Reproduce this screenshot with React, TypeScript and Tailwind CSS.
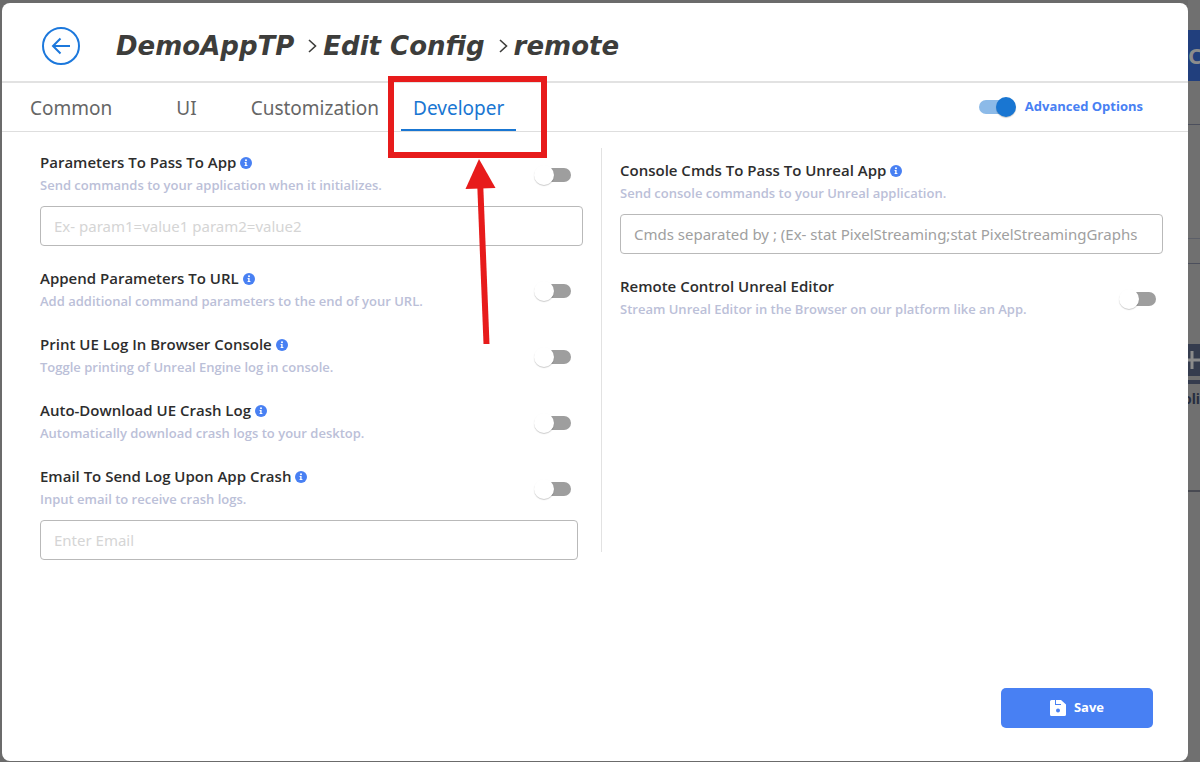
import React from "react";

interface SwitchProps {
    id: string;
    defaultChecked?: boolean;
}

const Switch: React.FC<SwitchProps> = ({ id, defaultChecked = false }) => (
    <input
        id={id}
        type="checkbox"
        role="switch"
        defaultChecked={defaultChecked}
        className="relative h-[14px] w-[34px] shrink-0 cursor-pointer appearance-none rounded-full bg-[#9e9e9e] before:absolute before:-left-[3px] before:-top-[3px] before:size-5 before:rounded-full before:bg-white before:shadow-[0_1px_1px_rgba(0,0,0,0.2)] checked:bg-[#8cbae8] checked:before:left-[17px] checked:before:bg-[#1976d2]"
    />
);

const InfoIcon = () => (
    <svg width="12" height="12" viewBox="0 0 12 12" className="mt-[2px]" aria-hidden="true">
        <circle cx="6" cy="6" r="6" fill="#4880f3" />
        <circle cx="6" cy="3.2" r="1" fill="#fff" />
        <path d="M4.6 5h2v3h.8v1H4.6V8h.6V6h-.6z" fill="#fff" />
    </svg>
);

interface SettingProps {
    id: string;
    title: string;
    description: string;
    info?: boolean;
    toggle?: boolean;
    children?: React.ReactNode;
}

const Setting: React.FC<SettingProps> = ({ id, title, description, info = true, toggle = true, children }) => (
    <div>
        <div className="flex items-center justify-between">
            <div className="font-['Open_Sans',sans-serif]">
                <div className="flex h-6 items-center gap-1">
                    <label htmlFor={id} className="text-[15px] leading-6 font-semibold text-[#2d2d2d]">{title}</label>
                    {info && <InfoIcon />}
                </div>
                <p className="text-[13px] leading-[22px] font-semibold text-[#bbc0d8]">{description}</p>
            </div>
            {toggle && (
                <div className="mr-3 flex items-center pt-1">
                    <Switch id={id} />
                </div>
            )}
        </div>
        {children}
    </div>
);

const inputClass = "mt-[10px] block h-10 w-full rounded-[4px] border border-[#b9b9b9] bg-transparent px-[13px] text-[15px] text-[#444] outline-none";

const tabs = [
    { name: "Common", className: "ml-3 px-4" },
    { name: "UI", className: "ml-8 px-4" },
    { name: "Customization", className: "ml-[22px] px-4" },
    { name: "Developer", className: "ml-[6px] px-3" },
];

// Part of the page that stays visible beside the dialog
const Backdrop = () => (
    <aside className="w-3 shrink-0 overflow-hidden bg-[#707070]" aria-hidden="true">
        <div className="mt-[30px] flex h-[51px] items-center bg-[#213f7d] text-[22px] font-bold text-[#8c8c8c]">C</div>
        <div className="h-11 border-b border-[#4c4f5c]" />
        <div className="h-[114px] border-b border-[#5c5f68]" />
        <div className="h-[25px] border-b border-[#4c4f5c]" />
        <div className="mt-20 flex h-8 items-center justify-center bg-[#353c4e]">
            <svg width="12" height="20" viewBox="0 0 12 20" stroke="#8b8b8b" strokeWidth="3">
                <path d="M0 10h12M4 1v18" />
            </svg>
        </div>
        <div className="mt-1 h-1 bg-[#353c4e]" />
        <div className="flex h-[108px] justify-end border-b-2 border-[#484a52] pt-1 text-[14px] font-bold text-[#262d3f]">oli</div>
    </aside>
);

const Annotation = () => (
    <svg className="pointer-events-none absolute left-[386px] top-[73px]" width="162" height="275" viewBox="0 0 162 275" aria-hidden="true">
        <rect x="5" y="6" width="153" height="76" fill="none" stroke="#e71b1b" strokeWidth="6" />
        <path d="M94 106L100.5 271" stroke="#e71b1b" strokeWidth="6" />
        <path d="M93 86L79.5 116L109.5 115Z" fill="#e71b1b" />
    </svg>
);

const Separator = () => (
    <svg width="9" height="14" viewBox="0 0 9 14" fill="none" stroke="#3d3d3b" strokeWidth="1.6" className="mr-[6px] ml-[14px]" aria-hidden="true">
        <path d="M1 1l6.5 6L1 13" />
    </svg>
);

export default function App() {
    return (
        <div className="relative flex min-h-screen bg-[#6b6b6b] font-['Noto_Sans',sans-serif]">
            <main className="mt-[3px] mb-px ml-[2px] flex flex-1 flex-col rounded-lg bg-white">
                <header className="flex h-20 items-center border-b-2 border-[#e2e2e2] pl-10">
                    <button type="button" aria-label="Back" className="mt-2">
                        <svg width="38" height="38" viewBox="0 0 38 38" fill="none" stroke="#1c78dc" strokeWidth="2">
                            <circle cx="19" cy="19" r="18" />
                            <path d="M28 19H11M18.5 11.5L11 19l7.5 7.5" />
                        </svg>
                    </button>
                    <h1 className="mt-2 ml-9 flex items-center font-['DejaVu_Sans',sans-serif] text-[26px] leading-8 font-bold text-[#3d3d3b] italic">
                        <span>DemoAppTP</span>
                        <Separator />
                        <span>Edit Config</span>
                        <Separator />
                        <span>remote</span>
                    </h1>
                </header>

                <div className="flex h-[49px] items-center justify-between border-b border-[#dedede]">
                    <nav className="flex h-full">
                        {tabs.map((tab) => (
                            <button
                                key={tab.name}
                                type="button"
                                className={`${tab.className} border-b-2 pt-1 text-[19px] ${tab.name === "Developer" ? "border-[#1976d2] text-[#1976d2]" : "border-transparent text-[#666]"}`}
                            >
                                {tab.name}
                            </button>
                        ))}
                    </nav>
                    <div className="mr-[45px] flex items-center gap-3 font-['Open_Sans',sans-serif]">
                        <Switch id="advanced" defaultChecked />
                        <label htmlFor="advanced" className="text-[13px] font-bold text-[#4880f3]">Advanced Options</label>
                    </div>
                </div>

                <div className="grid grid-cols-[1fr_1px_1fr] pt-4 pr-[25px] pl-[38px]">
                    <div className="flex flex-col gap-5 pt-[2px] pr-[18px]">
                        <Setting id="params" title="Parameters To Pass To App" description="Send commands to your application when it initializes.">
                            <input aria-label="Parameters" placeholder="Ex- param1=value1 param2=value2" className={`${inputClass} placeholder:text-[#d5d5d5]`} />
                        </Setting>
                        <Setting id="append" title="Append Parameters To URL" description="Add additional command parameters to the end of your URL." />
                        <Setting id="print" title="Print UE Log In Browser Console" description="Toggle printing of Unreal Engine log in console." />
                        <Setting id="crash" title="Auto-Download UE Crash Log" description="Automatically download crash logs to your desktop." />
                        <Setting id="email" title="Email To Send Log Upon App Crash" description="Input email to receive crash logs.">
                            <div className="pr-[5px]">
                                <input type="email" aria-label="Email" placeholder="Enter Email" className={`${inputClass} placeholder:text-[#d5d5d5]`} />
                            </div>
                        </Setting>
                    </div>
                    <div className="mb-2 bg-[#e2e2e2]" />
                    <div className="flex flex-col gap-5 pt-[10px] pl-[18px]">
                        <Setting id="cmds" title="Console Cmds To Pass To Unreal App" description="Send console commands to your Unreal application." toggle={false}>
                            <input id="cmds" placeholder="Cmds separated by ; (Ex- stat PixelStreaming;stat PixelStreamingGraphs" className={`${inputClass} placeholder:text-[#a0a0a0]`} />
                        </Setting>
                        <div className="-mr-[5px]">
                            <Setting id="remote" title="Remote Control Unreal Editor" description="Stream Unreal Editor in the Browser on our platform like an App." info={false} />
                        </div>
                    </div>
                </div>

                <footer className="mt-auto flex justify-end pr-[35px] pb-[33px]">
                    <button type="button" className="flex h-10 w-[152px] items-center justify-center gap-2 rounded-[5px] bg-[#4880f3] font-['Open_Sans',sans-serif] text-[13px] font-bold text-white">
                        <svg width="16" height="16" viewBox="0 0 16 16" aria-hidden="true">
                            <path d="M1.5 0H5v5h6V4H6V0h5l5 4.5v10a1.5 1.5 0 0 1-1.5 1.5h-13A1.5 1.5 0 0 1 0 14.5v-13A1.5 1.5 0 0 1 1.5 0z" fill="#fff" />
                            <circle cx="8" cy="10.5" r="2" fill="#4880f3" />
                        </svg>
                        Save
                    </button>
                </footer>
            </main>
            <Backdrop />
            <Annotation />
        </div>
    );
}
